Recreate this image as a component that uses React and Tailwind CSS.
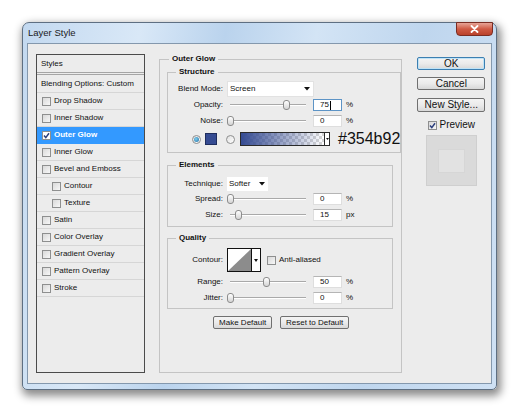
import React from 'react';

const styleRows = [
  { label: 'Drop Shadow' },
  { label: 'Inner Shadow' },
  { label: 'Outer Glow', checked: true, active: true },
  { label: 'Inner Glow' },
  { label: 'Bevel and Emboss' },
  { label: 'Contour', indent: true },
  { label: 'Texture', indent: true },
  { label: 'Satin' },
  { label: 'Color Overlay' },
  { label: 'Gradient Overlay' },
  { label: 'Pattern Overlay' },
  { label: 'Stroke' },
];

function Check({ checked, white }) {
  return (
    <span
      className={`w-[9px] h-[9px] shrink-0 border border-[#8e8f8f] flex items-center justify-center ${
        white ? 'bg-white' : 'bg-gradient-to-br from-[#d9d9d9] to-[#f7f7f7]'
      }`}
    >
      {checked && (
        <svg width="7" height="7" viewBox="0 0 7 7">
          <path d="M1 3.5 L2.8 5.6 L6 1.2" fill="none" stroke="#2b3f7c" strokeWidth="1.5" />
        </svg>
      )}
    </span>
  );
}

function Arrow() {
  return (
    <svg width="6" height="4" viewBox="0 0 6 4">
      <path d="M0 0 H6 L3 3.5 Z" fill="#111" />
    </svg>
  );
}

function Slider({ thumb }) {
  return (
    <div className="relative w-[82px] h-[16px] flex items-center px-[3px]">
      <div className="w-full h-[2px] border-t border-[#a9a9a9] border-b border-b-white" />
      <div
        className="absolute top-[3px] w-[7px] h-[10px] rounded-[3px] border border-[#8c8c8c] bg-gradient-to-b from-white to-[#d4d4d4]"
        style={{ left: thumb }}
      />
    </div>
  );
}

function NumInput({ value, focused }) {
  return (
    <div
      className={`w-[29px] h-[12px] bg-white border flex items-center pl-[6px] ${
        focused ? 'border-[#5d94c6]' : 'border-[#dedede] border-t-[#b5b5b5]'
      }`}
    >
      {value}
      {focused && <span className="w-px h-[9px] bg-black ml-px" />}
    </div>
  );
}

function SliderRow({ label, value, unit, thumb, focused }) {
  return (
    <div className="flex items-center h-[16px]">
      <span className="w-[55px] text-right">{label}</span>
      <div className="ml-[4px]">
        <Slider thumb={thumb} />
      </div>
      <div className="ml-[4px]">
        <NumInput value={value} focused={focused} />
      </div>
      <span className="ml-[4px]">{unit}</span>
    </div>
  );
}

function Group({ title, className, children }) {
  return (
    <fieldset className={`border border-[#c4c4c4] ${className}`}>
      <legend className="ml-[8px] px-[3px] font-bold leading-[10px]">{title}</legend>
      {children}
    </fieldset>
  );
}

function Radio({ on }) {
  return (
    <span className="w-[9px] h-[9px] rounded-full border border-[#8e8f8f] bg-gradient-to-br from-[#e0e0e0] to-white flex items-center justify-center shrink-0">
      {on && <span className="w-[5px] h-[5px] rounded-full bg-[radial-gradient(circle_at_40%_40%,#7fd0f0,#1f6aa0)]" />}
    </span>
  );
}

function PushButton({ children, primary, className }) {
  return (
    <div
      className={`flex items-center justify-center rounded-[2px] border bg-gradient-to-b from-[#f4f4f4] via-[#ebebeb] to-[#d8d8d8] ${
        primary ? 'border-[#3c7fb1] shadow-[inset_0_0_0_1px_#bfe3f7]' : 'border-[#707070]'
      } ${className}`}
    >
      {children}
    </div>
  );
}

export default function App() {
  return (
    <div className="w-[520px] h-[413px] overflow-hidden bg-white pt-[22px] pl-[22px] font-['Liberation_Sans',Arial,sans-serif] text-[#111]">
      <div className="w-[475px] h-[368px] rounded-t-[7px] rounded-b-[5px] border border-[#5e6f82] bg-[linear-gradient(100deg,#c3d9f0_0%,#d9e8f7_22%,#bad3ed_38%,#d3e4f5_55%,#bfd6ee_75%,#cfe1f4_100%)] shadow-[2px_4px_9px_2px_rgba(0,0,0,0.45)] flex flex-col">
        {/* title bar */}
        <div className="h-[20px] flex">
          <span className="flex-1 pl-[5px] pt-[5px] text-[9.5px] leading-none text-[#1b1b1b]">Layer Style</span>
          <div className="w-[37px] h-[14px] -mt-px mr-[3px] rounded-b-[4px] border border-[#7a2c22] bg-gradient-to-b from-[#e6a497] via-[#cf5a44] to-[#b9412b] flex items-center justify-center">
            <svg width="9" height="8" viewBox="0 0 9 8">
              <path d="M1.5 1 L7.5 7 M7.5 1 L1.5 7" stroke="#fff" strokeWidth="1.8" strokeLinecap="round" />
            </svg>
          </div>
        </div>

        {/* client */}
        <div className="mx-[4px] h-[341px] border border-[#8498ad] bg-[#ececec] flex pl-[8px] pt-[10px] text-[8px] leading-none">
          {/* styles list */}
          <div className="w-[109px] h-[319px] border border-[#4b4b4b] flex flex-col">
            <div className="h-[20px] border-b-[3px] border-double border-[#a5a5a5] flex items-center pl-[4px]">Styles</div>
            <div className="h-[18px] border-b border-[#d6d6d6] flex items-center pl-[4px]">Blending Options: Custom</div>
            {styleRows.map((r) => (
              <div
                key={r.label}
                className={`h-[17px] border-b flex items-center gap-[3px] ${r.indent ? 'pl-[15px]' : 'pl-[5px]'} ${
                  r.active ? 'bg-[#3399ff] border-[#3399ff] text-white font-bold' : 'border-[#d6d6d6]'
                }`}
              >
                <Check checked={r.checked} white={r.active} />
                <span>{r.label}</span>
              </div>
            ))}
          </div>

          {/* main settings */}
          <fieldset className="ml-[14px] w-[241px] h-[319px] border border-[#c4c4c4]">
            <legend className="ml-[9px] px-[3px] font-bold leading-[10px]">Outer Glow</legend>
            <div className="pl-[7px]">
              <Group title="Structure" className="mt-[3px] w-[226px] pb-[4px]">
                <div className="flex items-center h-[16px] mt-[4px]">
                  <span className="w-[55px] text-right">Blend Mode:</span>
                  <div className="ml-[4px] w-[87px] h-[16px] bg-white border border-[#e2e2e2] flex items-center justify-between pl-[2px] pr-[3px]">
                    <span>Screen</span>
                    <Arrow />
                  </div>
                </div>
                <SliderRow label="Opacity:" value="75" unit="%" thumb={56} focused />
                <SliderRow label="Noise:" value="0" unit="%" thumb={0} />
                <div className="flex items-center h-[18px] mt-px pl-[24px]">
                  <Radio on />
                  <span className="ml-[4px] w-[12px] h-[12px] bg-[#354b92] border border-[#1e2d5e]" />
                  <span className="ml-[9px]">
                    <Radio />
                  </span>
                  <div className="ml-[5px] w-[90px] h-[14px] border border-[#2a2a2a] flex">
                    <div className="flex-1 bg-[linear-gradient(to_right,#354b92,rgba(53,75,146,0)),repeating-conic-gradient(#d6d6d6_0%_25%,#ffffff_0%_50%)] [background-size:100%_100%,6px_6px]" />
                    <div className="w-[5px] border-l border-[#2a2a2a] bg-white flex items-center justify-center">
                      <svg width="3" height="2" viewBox="0 0 3 2">
                        <path d="M0 0 H3 L1.5 2 Z" fill="#111" />
                      </svg>
                    </div>
                  </div>
                  <span className="ml-[8px] text-[16px] leading-none whitespace-nowrap text-[#111]">#354b92</span>
                </div>
              </Group>

              <Group title="Elements" className="mt-[7px] w-[226px] pb-[3px]">
                <div className="flex items-center h-[14px] mt-[7px]">
                  <span className="w-[55px] text-right">Technique:</span>
                  <div className="ml-[4px] w-[41px] h-[14px] bg-white flex items-center justify-between pl-[2px] pr-[3px]">
                    <span>Softer</span>
                    <Arrow />
                  </div>
                </div>
                <SliderRow label="Spread:" value="0" unit="%" thumb={0} />
                <SliderRow label="Size:" value="15" unit="px" thumb={8} />
              </Group>

              <Group title="Quality" className="mt-[6px] w-[226px] pb-[2px]">
                <div className="flex items-center h-[24px] mt-[5px]">
                  <span className="w-[55px] text-right">Contour:</span>
                  <div className="ml-[4px] h-[24px] border border-[#111] bg-white flex">
                    <svg width="23" height="22" viewBox="0 0 23 22" className="block">
                      <path d="M0 22 L23 0 L23 22 Z" fill="#8c8c8c" />
                    </svg>
                    <div className="w-[9px] border-l border-[#111] flex items-center justify-center">
                      <svg width="4" height="3" viewBox="0 0 4 3">
                        <path d="M0 0 H4 L2 3 Z" fill="#111" />
                      </svg>
                    </div>
                  </div>
                  <span className="ml-[6px]">
                    <Check />
                  </span>
                  <span className="ml-[3px]">Anti-aliased</span>
                </div>
                <div className="mt-[2px]">
                  <SliderRow label="Range:" value="50" unit="%" thumb={36} />
                  <SliderRow label="Jitter:" value="0" unit="%" thumb={0} />
                </div>
              </Group>

              <div className="flex justify-center gap-[8px] mt-[7px] pr-[6px]">
                <PushButton className="w-[59px] h-[13px]">Make Default</PushButton>
                <PushButton className="w-[69px] h-[13px]">Reset to Default</PushButton>
              </div>
            </div>
          </fieldset>

          {/* right column */}
          <div className="ml-[15px] w-[68px] flex flex-col text-[10px]">
            <PushButton primary className="mt-[3px] h-[13px]">OK</PushButton>
            <PushButton className="mt-[7px] h-[13px]">Cancel</PushButton>
            <PushButton className="mt-[8px] h-[14px]">New Style...</PushButton>
            <div className="mt-[8px] h-[10px] flex items-center justify-center gap-[3px]">
              <Check checked />
              <span>Preview</span>
            </div>
            <div className="mt-[5px] mx-auto w-[51px] h-[51px] bg-[#dadada] border border-[#cfcfcf] flex items-center justify-center">
              <div className="w-[27px] h-[24px] bg-[#e2e2e2] border border-[#d6d6d6]" />
            </div>
          </div>
        </div>
      </div>
    </div>
  );
}
